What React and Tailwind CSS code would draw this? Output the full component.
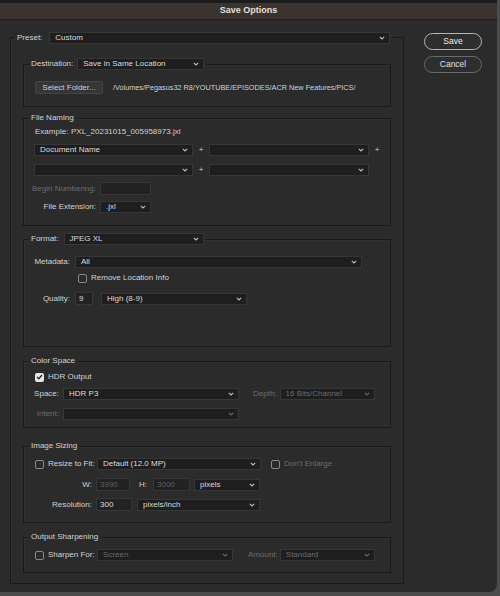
import React from 'react';

const font = { fontFamily: '"Liberation Sans", Arial, sans-serif' };

function Chevron({ dim }) {
  return (
    <svg width="6" height="4" viewBox="0 0 6 4" className={dim ? 'text-[#666]' : 'text-[#bdbdbd]'}>
      <path d="M0.8 0.8 L3 3 L5.2 0.8" fill="none" stroke="currentColor" strokeWidth="1.1" />
    </svg>
  );
}

function Select({ w, text, dim, className = '' }) {
  return (
    <div
      className={`h-[12px] shrink-0 flex items-center justify-between pl-[5px] pr-[4px] bg-[#1e1e1e] border border-[#363636] ${className}`}
      style={{ width: w }}
    >
      <span className={`text-[8px] leading-none ${dim ? 'text-[#6b6b6b]' : 'text-[#dcdcdc]'}`}>{text}</span>
      <Chevron dim={dim} />
    </div>
  );
}

function Input({ w, text, dim }) {
  return (
    <div
      className="h-[13px] shrink-0 flex items-center px-[3px] bg-[#222] border border-[#363636]"
      style={{ width: w }}
    >
      <span className={`text-[8px] leading-none ${dim ? 'text-[#5e5e5e]' : 'text-[#dcdcdc]'}`}>{text}</span>
    </div>
  );
}

function Check({ checked }) {
  return checked ? (
    <div className="w-[9px] h-[9px] rounded-[2px] bg-[#e6e6e6] flex items-center justify-center shrink-0">
      <svg width="7" height="6" viewBox="0 0 7 6">
        <path d="M1 3 L2.8 4.8 L6 1" fill="none" stroke="#2a2a2a" strokeWidth="1.4" />
      </svg>
    </div>
  ) : (
    <div className="w-[9px] h-[9px] rounded-[2px] border border-[#8a8a8a] shrink-0" />
  );
}

function Label({ children, dim, small, className = '' }) {
  return (
    <span
      className={`${small ? 'text-[7.3px]' : 'text-[8px]'} leading-none whitespace-nowrap ${dim ? 'text-[#6b6b6b]' : 'text-[#d2d2d2]'} ${className}`}
    >
      {children}
    </span>
  );
}

function Group({ legend, h, mt, children }) {
  return (
    <fieldset
      className="ml-[12px] w-[368px] border border-[#1a1a1a] shadow-[inset_1px_1px_0_#303030]"
      style={{ height: h, marginTop: mt }}
    >
      <legend className="ml-[5px] px-[2px]">
        {typeof legend === 'string' ? (
          <div className="h-[10px] flex items-center">
            <Label>{legend}</Label>
          </div>
        ) : (
          legend
        )}
      </legend>
      {children}
    </fieldset>
  );
}

export default function App() {
  return (
    <div className="w-[500px] h-[596px] bg-[#4b4b4b] overflow-hidden" style={font}>
      <div className="w-[497px] h-[592px] bg-[#2b2b2b] rounded-br-[8px] flex flex-col overflow-hidden">
        <div className="h-[3px] bg-[#1b1b1b]" />
        <div className="h-[17px] bg-[#3a3330] flex items-center justify-center border-b border-[#1e1e1e]">
          <span className="text-[9px] font-bold text-[#e4e0dc]">Save Options</span>
        </div>

        <div className="flex pt-[12px] pl-[10px]">
          {/* left: options */}
          <fieldset className="w-[394px] h-[552px] border border-[#1a1a1a] shadow-[inset_1px_1px_0_#303030]">
            <legend className="ml-[4px] px-[2px]">
              <div className="h-[11px] flex items-center">
                <Label className="mr-[7px]">Preset:</Label>
                <Select w={341} text="Custom" className="h-[11px]" />
              </div>
            </legend>

            <Group
              mt={15}
              h={49}
              legend={
                <div className="h-[12px] flex items-center">
                  <Label className="mr-[4px]">Destination:</Label>
                  <Select w={127} text="Save in Same Location" />
                </div>
              }
            >
              <div className="mt-[11px] ml-[11px] flex items-center">
                <div className="w-[68px] h-[13px] bg-[#363636] border border-[#454545] rounded-[2px] flex items-center justify-center">
                  <Label>Select Folder...</Label>
                </div>
                <Label small className="ml-[10px]">/Volumes/Pegasus32 R8/YOUTUBE/EPISODES/ACR New Features/PICS/</Label>
              </div>
            </Group>

            <Group mt={6} h={113} legend="File Naming">
              <div className="mt-[4px] ml-[11px] h-[10px] flex items-center">
                <Label className="w-[36px]">Example:</Label>
                <Label>PXL_20231015_005958973.jxl</Label>
              </div>
              <div className="mt-[7px] ml-[10px] flex items-center">
                <Select w={159} text="Document Name" />
                <span className="w-[16px] text-center text-[8px] text-[#cfcfcf]">+</span>
                <Select w={160} text="" />
                <span className="w-[16px] text-center text-[8px] text-[#cfcfcf]">+</span>
              </div>
              <div className="mt-[8px] ml-[10px] flex items-center">
                <Select w={159} text="" />
                <span className="w-[16px] text-center text-[8px] text-[#cfcfcf]">+</span>
                <Select w={160} text="" />
              </div>
              <div className="mt-[6px] flex items-center">
                <Label dim className="w-[72px] text-right">Begin Numbering:</Label>
                <div className="ml-[4px]">
                  <Input w={51} text="" />
                </div>
              </div>
              <div className="mt-[6px] flex items-center">
                <Label className="w-[72px] text-right">File Extension:</Label>
                <div className="ml-[4px]">
                  <Select w={51} text=".jxl" />
                </div>
              </div>
            </Group>

            <Group
              mt={7}
              h={114}
              legend={
                <div className="h-[12px] flex items-center">
                  <Label className="mr-[5px]">Format:</Label>
                  <Select w={140} text="JPEG XL" />
                </div>
              }
            >
              <div className="mt-[11px] flex items-center">
                <Label className="w-[46px] text-right">Metadata:</Label>
                <div className="ml-[5px]">
                  <Select w={287} text="All" />
                </div>
              </div>
              <div className="mt-[5px] ml-[54px] h-[10px] flex items-center">
                <Check />
                <Label className="ml-[4px]">Remove Location Info</Label>
              </div>
              <div className="mt-[9px] flex items-center">
                <Label className="w-[46px] text-right">Quality:</Label>
                <div className="ml-[5px] flex items-center">
                  <Input w={18} text="9" />
                  <Select w={146} text="High (8-9)" className="ml-[8px]" />
                </div>
              </div>
            </Group>

            <Group mt={9} h={72} legend="Color Space">
              <div className="mt-[6px] ml-[11px] h-[10px] flex items-center">
                <Check checked />
                <Label className="ml-[4px]">HDR Output</Label>
              </div>
              <div className="mt-[6px] flex items-center">
                <Label className="w-[35px] text-right">Space:</Label>
                <div className="ml-[4px] flex items-center">
                  <Select w={176} text="HDR P3" />
                  <Label dim className="ml-[14px]">Depth:</Label>
                  <Select w={95} text="16 Bits/Channel" dim className="ml-[3px]" />
                </div>
              </div>
              <div className="mt-[8px] flex items-center">
                <Label dim className="w-[35px] text-right">Intent:</Label>
                <div className="ml-[4px]">
                  <Select w={176} text="" dim />
                </div>
              </div>
            </Group>

            <Group mt={13} h={82} legend="Image Sizing">
              <div className="mt-[7px] ml-[11px] flex items-center">
                <Check />
                <Label className="ml-[4px] w-[49px]">Resize to Fit:</Label>
                <Select w={164} text="Default  (12.0 MP)" />
                <div className="ml-[10px] flex items-center">
                  <Check />
                  <Label dim className="ml-[4px]">Don&apos;t Enlarge</Label>
                </div>
              </div>
              <div className="mt-[8px] flex items-center">
                <Label className="w-[68px] text-right">W:</Label>
                <div className="ml-[4px] flex items-center">
                  <Input w={34} text="3990" dim />
                  <Label className="ml-[9px] w-[14px]">H:</Label>
                  <Input w={37} text="3000" dim />
                  <Select w={66} text="pixels" className="ml-[4px]" />
                </div>
              </div>
              <div className="mt-[7px] flex items-center">
                <Label className="w-[68px] text-right">Resolution:</Label>
                <div className="ml-[4px] flex items-center">
                  <Input w={36} text="300" />
                  <Select w={123} text="pixels/inch" className="ml-[5px]" />
                </div>
              </div>
            </Group>

            <Group mt={9} h={41} legend="Output Sharpening">
              <div className="mt-[7px] ml-[11px] flex items-center">
                <Check />
                <Label className="ml-[4px] w-[49px]">Sharpen For:</Label>
                <Select w={136} text="Screen" dim />
                <Label dim className="ml-[15px]">Amount:</Label>
                <Select w={95} text="Standard" dim className="ml-[2px]" />
              </div>
            </Group>
          </fieldset>

          {/* right: buttons */}
          <div className="ml-[20px] pt-[1px] flex flex-col gap-[6px]">
            <button className="w-[58px] h-[17px] rounded-full border border-[#b5b5b5] bg-[#2e2e2e] text-[8.5px] text-[#ececec]">
              Save
            </button>
            <button className="w-[58px] h-[17px] rounded-full border border-[#6a6a6a] bg-[#2e2e2e] text-[8.5px] text-[#e0e0e0]">
              Cancel
            </button>
          </div>
        </div>
      </div>
    </div>
  );
}
